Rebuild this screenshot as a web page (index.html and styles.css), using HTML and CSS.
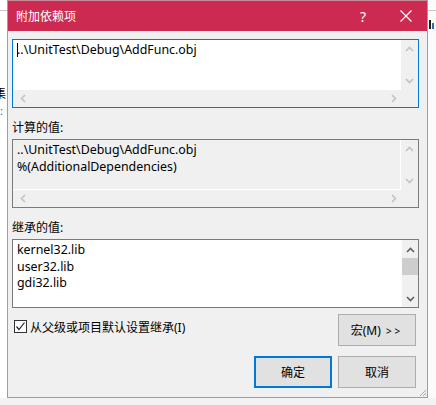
FILE: index.html
```html
<!DOCTYPE html>
<html>
<head>
    <meta charset="utf-8">
    <title>附加依赖项</title>
    <link rel="stylesheet" href="styles.css">
</head>
<body>
    <div class="desk">
        <!-- 背后窗口的一点边 -->
        <div class="desk-left">
            <div class="desk-line"></div>
            <div class="desk-glyph">集</div>
            <div class="desk-colon">:</div>
        </div>

        <div class="dialog">
            <div class="titlebar">
                <span class="title">附加依赖项</span>
                <span class="help">?</span>
                <span class="close">
                    <svg width="12" height="12" viewBox="0 0 12 12"><path d="M0.5 0.5 L11.5 11.5 M11.5 0.5 L0.5 11.5" stroke="#fff" stroke-width="1.2" fill="none"/></svg>
                </span>
            </div>

            <div class="content">
                <!-- 可编辑的输入框 -->
                <div class="box box-edit">
                    <div class="box-text"><span class="caret"></span>..\UnitTest\Debug\AddFunc.obj</div>
                    <div class="vscroll">
                        <svg class="arrow" width="9" height="6" viewBox="0 0 9 6"><path d="M1 5 L4.5 1.5 L8 5" stroke="#c2c2c2" stroke-width="1.6" fill="none"/></svg>
                        <svg class="arrow" width="9" height="6" viewBox="0 0 9 6"><path d="M1 1 L4.5 4.5 L8 1" stroke="#c2c2c2" stroke-width="1.6" fill="none"/></svg>
                    </div>
                    <div class="hscroll">
                        <svg class="arrow" width="6" height="9" viewBox="0 0 6 9"><path d="M5 1 L1.5 4.5 L5 8" stroke="#c2c2c2" stroke-width="1.6" fill="none"/></svg>
                        <svg class="arrow" width="6" height="9" viewBox="0 0 6 9"><path d="M1 1 L4.5 4.5 L1 8" stroke="#c2c2c2" stroke-width="1.6" fill="none"/></svg>
                    </div>
                </div>

                <div class="label">计算的值:</div>
                <div class="box box-readonly">
                    <div class="box-text">..\UnitTest\Debug\AddFunc.obj<br>%(AdditionalDependencies)</div>
                    <div class="vscroll">
                        <svg class="arrow" width="9" height="6" viewBox="0 0 9 6"><path d="M1 5 L4.5 1.5 L8 5" stroke="#c2c2c2" stroke-width="1.6" fill="none"/></svg>
                        <svg class="arrow" width="9" height="6" viewBox="0 0 9 6"><path d="M1 1 L4.5 4.5 L8 1" stroke="#c2c2c2" stroke-width="1.6" fill="none"/></svg>
                    </div>
                    <div class="hscroll">
                        <svg class="arrow" width="6" height="9" viewBox="0 0 6 9"><path d="M5 1 L1.5 4.5 L5 8" stroke="#c2c2c2" stroke-width="1.6" fill="none"/></svg>
                        <svg class="arrow" width="6" height="9" viewBox="0 0 6 9"><path d="M1 1 L4.5 4.5 L1 8" stroke="#c2c2c2" stroke-width="1.6" fill="none"/></svg>
                    </div>
                </div>

                <div class="label">继承的值:</div>
                <div class="box box-list">
                    <div class="box-text">kernel32.lib<br>user32.lib<br>gdi32.lib</div>
                    <div class="vscroll">
                        <svg class="arrow" width="9" height="6" viewBox="0 0 9 6"><path d="M1 5 L4.5 1.5 L8 5" stroke="#606060" stroke-width="1.6" fill="none"/></svg>
                        <div class="thumb"></div>
                        <svg class="arrow" width="9" height="6" viewBox="0 0 9 6"><path d="M1 1 L4.5 4.5 L8 1" stroke="#606060" stroke-width="1.6" fill="none"/></svg>
                    </div>
                </div>

                <div class="row-options">
                    <label class="check">
                        <span class="check-box">
                            <svg width="11" height="11" viewBox="0 0 11 11"><path d="M1.5 5.5 L4 8.5 L9.5 1.5" stroke="#222" stroke-width="1.2" fill="none"/></svg>
                        </span>
                        从父级或项目默认设置继承(I)
                    </label>
                    <button class="btn">宏(M) <span class="more">&gt;&gt;</span></button>
                </div>

                <div class="row-buttons">
                    <button class="btn btn-default">确定</button>
                    <button class="btn">取消</button>
                </div>
                <div class="grip">
                    <svg width="8" height="8" viewBox="0 0 8 8"><path d="M7 1 L1 7 M7 4 L4 7 M7 6.5 L6.5 7" stroke="#aaa" stroke-width="1" fill="none"/></svg>
                </div>
            </div>
        </div>

        <div class="desk-right">
            <div class="desk-line"></div>
            <div class="desk-bars"><i></i><i></i></div>
        </div>
    </div>
</body>
</html>
```

FILE: styles.css
```css
    /* 页面底色 */
    body {
        margin: 0;
        background: #f2f2f2;
        font-family: "Noto Sans", "Noto Sans CJK SC", sans-serif;
        font-size: 12px;
        color: #000;
    }
    .desk {
        display: flex;
        height: 398px;
        background: #fff;
    }
    /* 背后窗口的边缘 */
    .desk-left, .desk-right {
        width: 7px;
        overflow: hidden;
    }
    .desk-right {
        width: 8px;
        background: #fbfbfb;
    }
    .desk-line {
        height: 10px;
        border-bottom: 1px solid #c8c8c8;
    }
    .desk-glyph {
        margin-top: 77px;
        margin-left: -6px;
        font-size: 12px;
        line-height: 12px;
        height: 12px;
        overflow: hidden;
    }
    .desk-colon {
        color: #1c6fc8;
        margin-top: 6px;
        font-size: 11px;
        line-height: 10px;
    }
    .desk-bars {
        display: flex;
        gap: 1px;
        align-items: flex-end;
        height: 10px;
        margin-top: 8px;
        padding-left: 1px;
    }
    .desk-bars i {
        width: 2px;
        height: 9px;
        background: #1e1e1e;
    }
    .desk-bars i + i {
        height: 6px;
        background: #2b6cc4;
    }
    /* 对话框 */
    .dialog {
        width: 420px;
        height: 396px;
        border: 1px solid #c8899a;
        background: #f0f0f0;
        display: flex;
        flex-direction: column;
    }
    .titlebar {
        height: 30px;
        background: #cd2a52;
        color: #fff;
        display: flex;
        align-items: center;
    }
    .title {
        margin-left: 8px;
        flex: 1;
        font-size: 12px;
        padding-bottom: 1px;
    }
    .help {
        font-size: 14px;
        width: 14px;
        margin-right: 30px;
        text-align: center;
    }
    .close {
        display: flex;
        margin-right: 15px;
    }
    .content {
        flex: 1;
        padding: 8px 8px 0 4px;
        display: flex;
        flex-direction: column;
        position: relative;
    }
    /* 文本框 */
    .box {
        height: 67px;
        border: 1px solid #7a7a7a;
        display: grid;
        grid-template-columns: 1fr 17px;
        grid-template-rows: 1fr 17px;
        background: #f0f0f0;
    }
    .box-edit {
        border-color: #0078d7;
    }
    .box-list {
        grid-template-rows: 1fr;
        background: #fff;
    }
    .box-text {
        padding: 2px 4px;
        font-size: 12.4px;
        line-height: 16.6px;
        white-space: nowrap;
        overflow: hidden;
    }
    .box-edit .box-text {
        background: #fff;
    }
    .box-readonly .box-text {
        border-right: 1px solid #fff;
        border-bottom: 1px solid #fff;
    }
    .caret {
        display: inline-block;
        width: 1px;
        height: 14px;
        background: #000;
        vertical-align: -3px;
        margin-right: -1px;
    }
    .vscroll {
        background: #f0f0f0;
        display: flex;
        flex-direction: column;
        align-items: center;
        justify-content: space-between;
        padding: 6px 0;
    }
    .box-list .vscroll {
        border-left: 1px solid #fff;
        padding: 7px 0 5px;
        align-items: stretch;
    }
    .box-list .vscroll .arrow {
        align-self: center;
    }
    .thumb {
        height: 17px;
        margin-top: 5px;
        background: #cdcdcd;
        flex: none;
        margin-bottom: auto;
    }
    .hscroll {
        background: #f0f0f0;
        display: flex;
        align-items: center;
        justify-content: space-between;
        padding: 0 21px 0 7px;
        grid-column: 1 / 3;
    }
    .label {
        margin-top: 12px;
        margin-bottom: 3px;
        line-height: 16px;
    }
    /* 选项和按钮 */
    .row-options {
        margin-top: 6px;
        display: flex;
        align-items: center;
        justify-content: space-between;
        padding-right: 3px;
    }
    .check {
        display: flex;
        align-items: center;
        gap: 3px;
        padding-left: 2px;
        margin-top: -7px;
    }
    .check-box {
        width: 11px;
        height: 11px;
        border: 1px solid #333;
        background: #fff;
        display: flex;
    }
    .btn {
        width: 78px;
        height: 32px;
        border: 1px solid #adadad;
        background: #e1e1e1;
        font-family: "Noto Sans", "Noto Sans CJK SC", sans-serif;
        font-size: 12px;
        color: #000;
        padding: 0;
    }
    .more {
        font-size: 10px;
        letter-spacing: 3px;
        margin-left: 2px;
    }
    .row-buttons {
        margin-top: 10px;
        display: flex;
        justify-content: flex-end;
        gap: 6px;
        padding-right: 3px;
    }
    .btn-default {
        border: 2px solid #0078d7;
    }
    .grip {
        position: absolute;
        right: 0;
        bottom: 0;
        display: flex;
    }
```
